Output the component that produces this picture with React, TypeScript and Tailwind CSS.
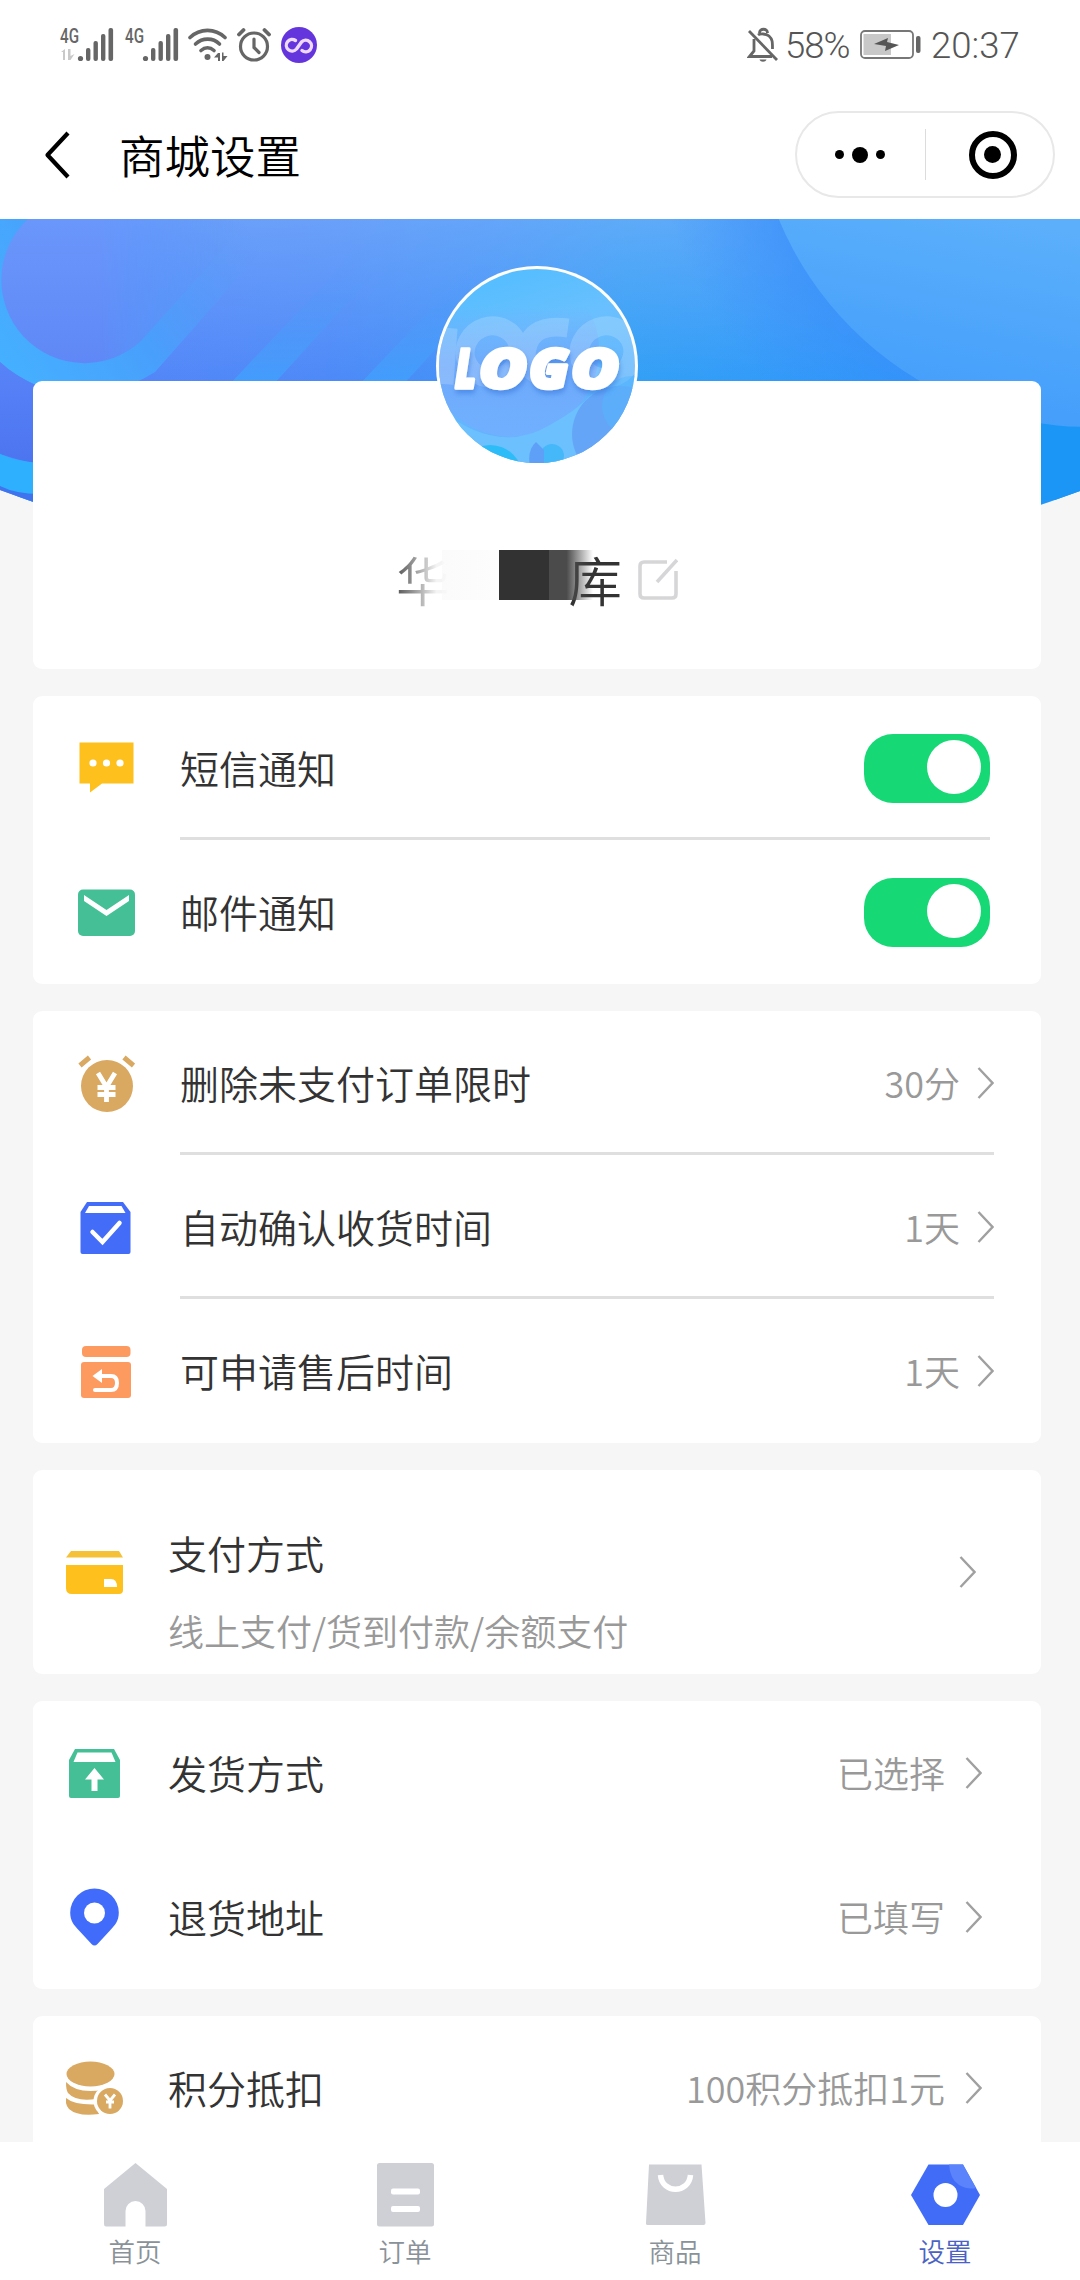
import type { ReactNode } from "react"

/* ---------- status bar icons ---------- */

function Signal({ data }: { data?: boolean }) {
  return (
    <svg width="54" height="36" viewBox="0 0 54 36" fill="#666" className="overflow-visible">
      <text x="0" y="16" fontSize="20.5" fontWeight="500" textLength="19" lengthAdjust="spacingAndGlyphs" className="font-[Roboto]">
        4G
      </text>
      {data && <path d="M1 25l4-3v11H3v-8zM8 22h2.500v7l4-2-4 6H8z" fill="#c9c9c9" />}
      <circle cx="20.500" cy="31.500" r="2.600" />
      <rect x="26" y="21" width="4.400" height="13" rx="2" />
      <rect x="33.500" y="14" width="4.400" height="20" rx="2" />
      <rect x="41" y="7" width="4.400" height="27" rx="2" />
      <rect x="48.500" y="1" width="4.600" height="33" rx="2" />
    </svg>
  )
}

function Wifi() {
  return (
    <svg width="40" height="36" viewBox="0 0 40 36" fill="none" stroke="#666" strokeWidth="3.600" strokeLinecap="round">
      <path d="M2 10.500C12 1 27 1 37 10.500" />
      <path d="M7.500 17C14.500 10.500 25 10.500 31.500 17" />
      <path d="M13 23.500c4-3.500 9-3.500 13 0" />
      <circle cx="19.500" cy="30" r="3" fill="#666" stroke="none" />
      <path d="M26 30.500l4-4.500h2v8h-2v-3.500zM34 25.500h1.500v3.500h4l-4 5h-1.500z" fill="#666" stroke="none" />
    </svg>
  )
}

function Alarm() {
  return (
    <svg width="34" height="36" viewBox="0 0 34 36" fill="none" stroke="#666" strokeWidth="3.200" strokeLinecap="round">
      <circle cx="17" cy="19.500" r="13.500" />
      <path d="M17 12v8.500l5 5" />
      <path d="M2 7.500l4.500-4.500M32 7.500L27.500 3" strokeWidth="3.800" />
    </svg>
  )
}

function Infinity() {
  return (
    <svg width="36" height="36" viewBox="0 0 36 36">
      <circle cx="18" cy="18" r="18" fill="#6435dc" />
      <path
        d="M14.500 13.500A5.800 5.800 0 1 0 15.500 22L20.500 15a5.800 5.800 0 1 1 .5 8.500"
        fill="none"
        stroke="#efd9ff"
        strokeWidth="3.400"
        strokeLinecap="round"
        strokeLinejoin="round"
      />
    </svg>
  )
}

function BellOff() {
  return (
    <svg width="32" height="36" viewBox="0 0 32 36" fill="none" stroke="#666" strokeWidth="2.800">
      <path d="M2 4l28 29" />
      <path d="M7 12v12l-4.500 5.500H25" />
      <path d="M11 8c2-1.500 8-1.500 11 1 3.500 3 3.500 6 3.500 13" />
      <path d="M12.500 6c0-5 8-5 8 0" />
      <path d="M12.500 32.500h7c-1 3-6 3-7 0z" fill="#666" stroke="none" />
    </svg>
  )
}

function Battery() {
  return (
    <svg width="62" height="32" viewBox="0 0 62 32">
      <rect x="1" y="2" width="52" height="27" rx="4" fill="#fff" stroke="#777" strokeWidth="1.800" />
      <rect x="3.500" y="5" width="27.500" height="21" fill="#c8c8c8" />
      <path d="M14 15l14-6-1 4 12 3-14 6 1-5z" fill="#555" />
      <rect x="56" y="7" width="4.500" height="17" rx="2" fill="#666" />
    </svg>
  )
}

function StatusBar() {
  return (
    <div className="flex h-[90px] items-center justify-between pr-[58px] pl-[60px]">
      <div className="flex items-center">
        <Signal data />
        <span className="w-[11px]" />
        <Signal />
        <span className="w-[9px]" />
        <Wifi />
        <span className="w-[9px]" />
        <Alarm />
        <span className="w-[10px]" />
        <Infinity />
      </div>
      <div className="flex items-center font-[Roboto] text-[36.500px] leading-none font-light text-[#555]">
        <BellOff />
        <span className="mt-[2px] ml-[6px] w-[75px] tracking-[-1px]">58%</span>
        <Battery />
        <span className="mt-[2px] ml-[9px] w-[91px]">20:37</span>
      </div>
    </div>
  )
}

function NavBar() {
  return (
    <div className="flex h-[129px] items-center pr-[25px] pl-[43px]">
      <svg width="28" height="48" viewBox="0 0 28 48" fill="none" stroke="#000" strokeWidth="4.200" className="shrink-0">
        <path d="M25 2L4.500 24 25 46" strokeLinejoin="round" />
      </svg>
      <h1 className="ml-[48px] flex-1 text-[45.500px] leading-none text-black">商城设置</h1>
      <div className="flex h-[87px] w-[260px] items-center rounded-full border-2 border-[#e8e8e8]">
        <div className="flex h-[51px] w-[129px] items-center justify-center gap-[8px] border-r border-[#dcdcdc] pr-[2px]">
          <i className="size-[9px] rounded-full bg-black" />
          <i className="size-[16px] rounded-full bg-black" />
          <i className="size-[9px] rounded-full bg-black" />
        </div>
        <div className="flex flex-1 justify-center pl-[6px]">
          <div className="flex size-[48px] items-center justify-center rounded-full border-[6px] border-black">
            <i className="size-[17px] rounded-full bg-black" />
          </div>
        </div>
      </div>
    </div>
  )
}

/* ---------- header banner ---------- */

function Banner() {
  return (
    <svg width="1080" height="300" viewBox="0 219 1080 300" className="absolute top-0 left-0">
      <defs>
        <linearGradient id="base" gradientUnits="userSpaceOnUse" x1="0" y1="0" x2="1080" y2="0">
          <stop offset="0" stopColor="#5582f9" />
          <stop offset="0.300" stopColor="#4c88f8" />
          <stop offset="0.450" stopColor="#3f92f8" />
          <stop offset="0.580" stopColor="#309ff5" />
          <stop offset="0.720" stopColor="#2f9af9" />
          <stop offset="1" stopColor="#1b98f6" />
        </linearGradient>
        <linearGradient id="fade" gradientUnits="userSpaceOnUse" x1="0" y1="219" x2="0" y2="390">
          <stop offset="0" stopColor="#82b4fb" stopOpacity="0.550" />
          <stop offset="1" stopColor="#82b4fb" stopOpacity="0" />
        </linearGradient>
        <linearGradient id="ring" gradientUnits="userSpaceOnUse" x1="0" y1="360" x2="230" y2="200">
          <stop offset="0" stopColor="#45b0ff" />
          <stop offset="0.450" stopColor="#48a0fc" />
          <stop offset="1" stopColor="#5a9bf9" stopOpacity="0" />
        </linearGradient>
        <linearGradient id="stripe" gradientUnits="userSpaceOnUse" x1="0" y1="390" x2="0" y2="265">
          <stop offset="0" stopColor="#409ffc" />
          <stop offset="1" stopColor="#5598f9" stopOpacity="0" />
        </linearGradient>
        <linearGradient id="pill" gradientUnits="userSpaceOnUse" x1="0" y1="219" x2="0" y2="365">
          <stop offset="0" stopColor="#6a97fb" />
          <stop offset="1" stopColor="#5f88f6" />
        </linearGradient>
        <linearGradient id="pillMask" gradientUnits="userSpaceOnUse" x1="100" y1="0" x2="235" y2="0">
          <stop offset="0" stopColor="#fff" />
          <stop offset="1" stopColor="#fff" stopOpacity="0" />
        </linearGradient>
        <mask id="soft" maskUnits="userSpaceOnUse" x="0" y="219" width="300" height="160">
          <rect y="219" width="300" height="160" fill="url(#pillMask)" />
        </mask>
        <linearGradient id="deep" gradientUnits="userSpaceOnUse" x1="0" y1="360" x2="0" y2="465">
          <stop offset="0" stopColor="#5884f8" />
          <stop offset="1" stopColor="#4c74f0" />
        </linearGradient>
        <linearGradient id="sky" gradientUnits="userSpaceOnUse" x1="1000" y1="219" x2="960" y2="427">
          <stop offset="0" stopColor="#5baffb" />
          <stop offset="1" stopColor="#429dfb" />
        </linearGradient>
        <radialGradient id="shade" gradientUnits="userSpaceOnUse" cx="1090" cy="90" r="440">
          <stop offset="0.760" stopColor="#3a8ffa" stopOpacity="0.700" />
          <stop offset="1" stopColor="#3a8ffa" stopOpacity="0" />
        </radialGradient>
        <clipPath id="edge">
          <path d="M0 219H1080V491Q810 590 540 590T0 490z" />
        </clipPath>
      </defs>
      <g clipPath="url(#edge)">
        <rect y="219" width="1080" height="300" fill="url(#base)" />
        <rect y="219" width="1080" height="300" fill="url(#fade)" />
        <path d="M0 219H290L155 372Q90 412 33 384Q15 376 0 362z" fill="url(#ring)" />
        <path d="M28 219A81 81 0 1 0 141 341L250 219z" fill="url(#pill)" mask="url(#soft)" />
        <path d="M228 386L345 262H385L272 386z" fill="url(#stripe)" />
        <path d="M358 386L475 262H515L402 386z" fill="url(#stripe)" />
        <path d="M0 362Q15 376 40 387V466L0 454z" fill="url(#deep)" />
        <path d="M0 454Q20 462 40 463V508L0 488z" fill="#2fb0ff" />
        <path d="M0 486Q16 494 40 494V512L0 492z" fill="#3f74ee" />
        <circle cx="1090" cy="90" r="440" fill="url(#shade)" />
        <path d="M1041 419L1080 426V500H1041z" fill="#1b96f6" />
        <circle cx="1090" cy="90" r="337" fill="url(#sky)" />
      </g>
    </svg>
  )
}

function Avatar() {
  return (
    <svg width="202" height="200" viewBox="0 0 202 200">
      <defs>
        <linearGradient id="av" x1="0.300" y1="0" x2="0.600" y2="1">
          <stop offset="0" stopColor="#52bdff" />
          <stop offset="0.350" stopColor="#6ac0fe" />
          <stop offset="1" stopColor="#5cabfb" />
        </linearGradient>
        <linearGradient id="disc" x1="0" y1="0" x2="0" y2="1">
          <stop offset="0.250" stopColor="#6fa4fb" stopOpacity="0" />
          <stop offset="0.600" stopColor="#70a8fb" stopOpacity="0.900" />
          <stop offset="1" stopColor="#70b0ff" />
        </linearGradient>
        <clipPath id="avc">
          <ellipse cx="101" cy="100" rx="98" ry="97" />
        </clipPath>
        <filter id="drop" x="-10%" y="-20%" width="120%" height="160%">
          <feDropShadow dx="1" dy="4" stdDeviation="2.500" floodColor="#3478dc" floodOpacity="0.550" />
        </filter>
      </defs>
      <ellipse cx="101" cy="100" rx="101" ry="100" fill="#fff" />
      <g clipPath="url(#avc)">
        <rect width="202" height="200" fill="url(#av)" />
        <circle cx="76" cy="84" r="87" fill="url(#disc)" />
        {/* faint rings behind the wordmark */}
        <g fill="none" stroke="#fff" strokeWidth="19" opacity="0.180">
          <ellipse cx="56" cy="86" rx="27" ry="26" transform="rotate(-18 56 86)" />
          <path d="M132 62Q90 56 90 92Q92 112 118 110" />
          <ellipse cx="170" cy="86" rx="27" ry="26" transform="rotate(-18 170 86)" />
          <path d="M12 62L8 118" />
        </g>
        <path d="M0 140Q60 190 112 160Q140 145 156 128L150 200H0z" fill="#6cc0fe" />
        <circle cx="54" cy="212" r="33" fill="#2cbcf8" />
        <circle cx="116" cy="190" r="12" fill="#45b8fa" />
        <path d="M94 200q-3-16 6-24l8 8v16z" fill="#5e9ff7" />
        <circle cx="184" cy="168" r="48" fill="#64a5f8" />
        <circle cx="196" cy="140" r="30" fill="#54b8fd" opacity="0.500" />
      </g>
      <text
        y="122"
        fontSize="55"
        fontWeight="800"
        fontStyle="italic"
        fill="#fff"
        stroke="#fff"
        strokeWidth="3.600"
        strokeLinejoin="round"
        filter="url(#drop)"
        className="font-['Open_Sans']"
      >
        <tspan x="19" textLength="21" lengthAdjust="spacingAndGlyphs">L</tspan>
        <tspan x="43" textLength="48" lengthAdjust="spacingAndGlyphs">O</tspan>
        <tspan x="93" textLength="40" lengthAdjust="spacingAndGlyphs">G</tspan>
        <tspan x="135" textLength="48" lengthAdjust="spacingAndGlyphs">O</tspan>
      </text>
    </svg>
  )
}

function ProfileCard() {
  return (
    <section className="relative mt-[162px] h-[288px] rounded-[9px] bg-white">
      <div className="absolute top-[-115px] left-[403px]">
        <Avatar />
      </div>
      <div className="flex justify-center pt-[168px]">
        <div className="relative flex w-[226px] justify-between text-[53.500px] leading-[60px] text-[#333]">
          <span className="bg-gradient-to-r from-[#555] to-[#f4f4f4] to-75% bg-clip-text text-transparent">华</span>
          <span>库</span>
          {/* censored part of the shop name */}
          <div className="absolute top-[1px] left-[46px] flex h-[50px]">
            <i className="w-[57px] bg-gradient-to-r from-[#f8f8f8]/60 to-[#fdfdfd]" />
            <i className="w-[50px] bg-[#323232]" />
            <i className="w-[44px] bg-gradient-to-r from-[#4b4b4b] from-40% to-transparent" />
          </div>
        </div>
        <svg width="40" height="42" viewBox="0 0 40 42" fill="none" stroke="#d6d6d8" strokeWidth="3.600" className="mt-[9px] ml-[16px]">
          <path d="M29 4H6Q2 4 2 8v28q0 4 4 4h28q4 0 4-4V13" />
          <path d="M19 24L39 2" />
        </svg>
      </div>
    </section>
  )
}

/* ---------- row icons, all in a 57x60 box ---------- */

function Box({ children }: { children: ReactNode }) {
  return (
    <svg width="57" height="60" viewBox="0 0 57 60" className="shrink-0">
      {children}
    </svg>
  )
}

const SmsIcon = () => (
  <Box>
    <path d="M1.500 4.500H55.500V45.500H24L12 54.500V45.500H1.500z" fill="#fdc01c" />
    <circle cx="15" cy="25" r="3.600" fill="#fff" />
    <circle cx="28.500" cy="25" r="3.600" fill="#fff" />
    <circle cx="42" cy="25" r="3.600" fill="#fff" />
  </Box>
)

const MailIcon = () => (
  <Box>
    <rect y="7.500" width="57" height="46.500" rx="5" fill="#45c096" />
    <path d="M6 13L28.500 28 51 13V19L28.500 34 6 19z" fill="#fff" />
  </Box>
)

const ClockIcon = () => (
  <Box>
    <circle cx="29" cy="33" r="26" fill="#d9a861" />
    <path d="M2 12.500L11.500 4.500M55.500 12.500L46 4.500" stroke="#d9a861" strokeWidth="5" />
    <path d="M20 20L28.500 34 37 20M28.500 33V49M19.500 34.500H37.500M19.500 41.500H37.500" fill="none" stroke="#fff" strokeWidth="4.800" />
  </Box>
)

const CheckBoxIcon = () => (
  <Box>
    <path d="M9 5H45L52.500 15V55Q52.500 57 50.500 57H4.500Q2.500 57 2.500 55V15z" fill="#436cf8" />
    <path d="M11 9H43.500L47.500 16H7z" fill="#fff" />
    <path d="M14.500 35L24.500 45 41.500 26" fill="none" stroke="#fff" strokeWidth="4.500" strokeLinecap="round" />
  </Box>
)

const ReturnIcon = () => (
  <Box>
    <rect x="4" y="5" width="48.500" height="11" rx="4" fill="#fd9a60" />
    <rect x="3" y="21" width="50" height="36" rx="3" fill="#fd9a60" />
    <path d="M21 35H33Q39 35 39 42T33 49H17" fill="none" stroke="#fff" strokeWidth="4" strokeLinecap="round" />
    <path d="M14.500 35L24 28V42z" fill="#fff" />
  </Box>
)

const CardIcon = () => (
  <Box>
    <path d="M5 9H53L57 15.500H0z" fill="#f5c136" />
    <path d="M0 23H57V48Q57 52 53 52H6Q0 52 0 46z" fill="#fdc01c" />
    <path d="M38 37H45Q51 37 51 45H38z" fill="#fff" />
  </Box>
)

const ShipIcon = () => (
  <Box>
    <path d="M9 6H48L54 17V53Q54 55 52 55H5Q3 55 3 53V17z" fill="#45c096" />
    <path d="M11.500 9.500H45.500L49.500 19H7.500z" fill="#fff" />
    <path d="M28.500 25L38 36.500H31.500V48H25.500V36.500H19z" fill="#fff" />
  </Box>
)

const PinIcon = () => (
  <Box>
    <path d="M28.500 1.500A24.300 24.300 0 0 1 52.800 25.500C52.800 34 49 38 44 43.500L31.500 57Q28.500 60 25.500 57L13 43.500C8 38 4.200 34 4.200 25.500A24.300 24.300 0 0 1 28.500 1.500z" fill="#416cfb" />
    <circle cx="28.500" cy="26" r="10.500" fill="#fff" />
  </Box>
)

const CoinsIcon = () => (
  <Box>
    <g fill="#d9a861">
      <ellipse cx="24.500" cy="16" rx="24" ry="12.500" />
      <path d="M0 24Q8 33 24.500 33 31 33 36 31.500L30 41Q10 44 2 35Q0 32 0 24z" />
      <path d="M0 40Q8 47 29 46.500L33 56Q12 59 3 51Q-1 47 0 40z" />
      <circle cx="43.500" cy="43" r="16" fill="#fff" />
      <circle cx="44" cy="43" r="13" />
    </g>
    <path d="M39 36.500L44 42.500 49 36.500M44 42V50.500M40 44H48" fill="none" stroke="#fff" strokeWidth="2.800" />
  </Box>
)

/* ---------- settings list ---------- */

function Chevron() {
  return (
    <svg width="17" height="32" viewBox="0 0 17 32" fill="none" stroke="#a0a0a0" strokeWidth="2.400" className="shrink-0">
      <path d="M1.500 1L15.500 16 1.500 31" />
    </svg>
  )
}

function Toggle() {
  return (
    <div className="h-[69px] w-[126px] rounded-[29px] bg-[#16d874] pt-[6px] pl-[63px]">
      <div className="size-[54px] rounded-full bg-white" />
    </div>
  )
}

type RowProps = { icon: ReactNode; label: string; value?: string; toggle?: boolean; divider?: boolean; gap?: string }

function Row({ icon, label, value, toggle, divider, gap = "gap-[20px]" }: RowProps) {
  return (
    <div className="flex h-[144px] items-center">
      {icon}
      <div className={`ml-[45px] flex h-full flex-1 items-center justify-between ${divider ? "shadow-[inset_0_-3px_#dfdfdf]" : ""}`}>
        <span className="pb-[2px] text-[39px] leading-none text-[#333]">{label}</span>
        {toggle ? (
          <Toggle />
        ) : (
          <span className={`flex items-center text-[36px] leading-none text-[#999] ${gap}`}>
            <span className="pb-[2px]">{value}</span>
            <Chevron />
          </span>
        )}
      </div>
    </div>
  )
}

/* ---------- tab bar ---------- */

const tabs = [
  {
    label: "首页",
    color: "text-[#8a9299]",
    icon: <path d="M35.500 1L67 27V62Q67 64.500 64.500 64.500H45.500V49A10 10 0 0 0 25.500 49V64.500H6Q4 64.500 4 62V27z" fill="#cfd0d6" />,
  },
  {
    label: "订单",
    color: "text-[#8a9299]",
    icon: (
      <>
        <rect x="7" y="1" width="57" height="63.500" rx="2.500" fill="#cfd0d6" />
        <rect x="21" y="26.500" width="29" height="6" rx="2" fill="#fff" />
        <rect x="21" y="44" width="29" height="6" rx="2" fill="#fff" />
      </>
    ),
  },
  {
    label: "商品",
    color: "text-[#8a9299]",
    icon: (
      <>
        <path d="M9 2.500H61.500L65.500 61Q65.500 63 63.500 63H7.500Q5.500 63 6 61z" fill="#cfd0d6" />
        <path d="M20.500 13C22 32 49 32 50.500 13" fill="none" stroke="#fff" strokeWidth="5.500" />
      </>
    ),
  },
  {
    label: "设置",
    color: "text-[#4a62c4]",
    icon: (
      <>
        <path d="M18.500 2.500H53L70 33 53 63H18.500L1 33z" fill="#416cf8" />
        <path d="M39 2.500H53L66 26Q58 28 49 23Q40 17 39 2.500z" fill="#5b83fb" />
        <circle cx="35.500" cy="33" r="12" fill="#fff" />
      </>
    ),
  },
]

function TabBar() {
  return (
    <nav className="grid h-[138px] shrink-0 grid-cols-4 bg-white">
      {tabs.map((tab) => (
        <div key={tab.label} className="flex flex-col items-center pt-[20px]">
          <svg width="71" height="66" viewBox="0 0 71 66">
            {tab.icon}
          </svg>
          <span className={`mt-[8px] text-[26.500px] leading-[30px] ${tab.color}`}>{tab.label}</span>
        </div>
      ))}
    </nav>
  )
}

export default function App() {
  return (
    <div className="flex h-[2280px] w-[1080px] flex-col overflow-hidden bg-white font-['Noto_Sans_CJK_SC',sans-serif] font-[350]">
      <header className="h-[219px] shrink-0">
        <StatusBar />
        <NavBar />
      </header>

      <main className="relative min-h-0 flex-1 overflow-hidden bg-[#f6f6f6]">
        <Banner />
        <div className="flex flex-col gap-[27px] pr-[39px] pl-[33px]">
          <ProfileCard />

          <section className="rounded-[9px] bg-white pr-[51px] pl-[45px]">
            <Row icon={<SmsIcon />} label="短信通知" toggle divider />
            <Row icon={<MailIcon />} label="邮件通知" toggle />
          </section>

          <section className="rounded-[9px] bg-white pr-[47px] pl-[45px]">
            <Row icon={<ClockIcon />} label="删除未支付订单限时" value="30分" gap="gap-[17px]" divider />
            <Row icon={<CheckBoxIcon />} label="自动确认收货时间" value="1天" gap="gap-[17px]" divider />
            <Row icon={<ReturnIcon />} label="可申请售后时间" value="1天" gap="gap-[17px]" />
          </section>

          <section className="flex h-[204px] items-center rounded-[9px] bg-white pr-[65px] pl-[33px]">
            <CardIcon />
            <div className="mt-[35px] ml-[45px] flex-1">
              <p className="text-[39px] leading-[44px] text-[#333]">支付方式</p>
              <p className="mt-[36px] text-[36px] leading-[40px] text-[#999]">线上支付/货到付款/余额支付</p>
            </div>
            <Chevron />
          </section>

          <section className="rounded-[9px] bg-white pr-[59px] pl-[33px]">
            <Row icon={<ShipIcon />} label="发货方式" value="已选择" />
            <Row icon={<PinIcon />} label="退货地址" value="已填写" />
          </section>

          <section className="rounded-[9px] bg-white pr-[59px] pl-[33px]">
            <Row icon={<CoinsIcon />} label="积分抵扣" value="100积分抵扣1元" />
          </section>
        </div>
      </main>

      <TabBar />
    </div>
  )
}
